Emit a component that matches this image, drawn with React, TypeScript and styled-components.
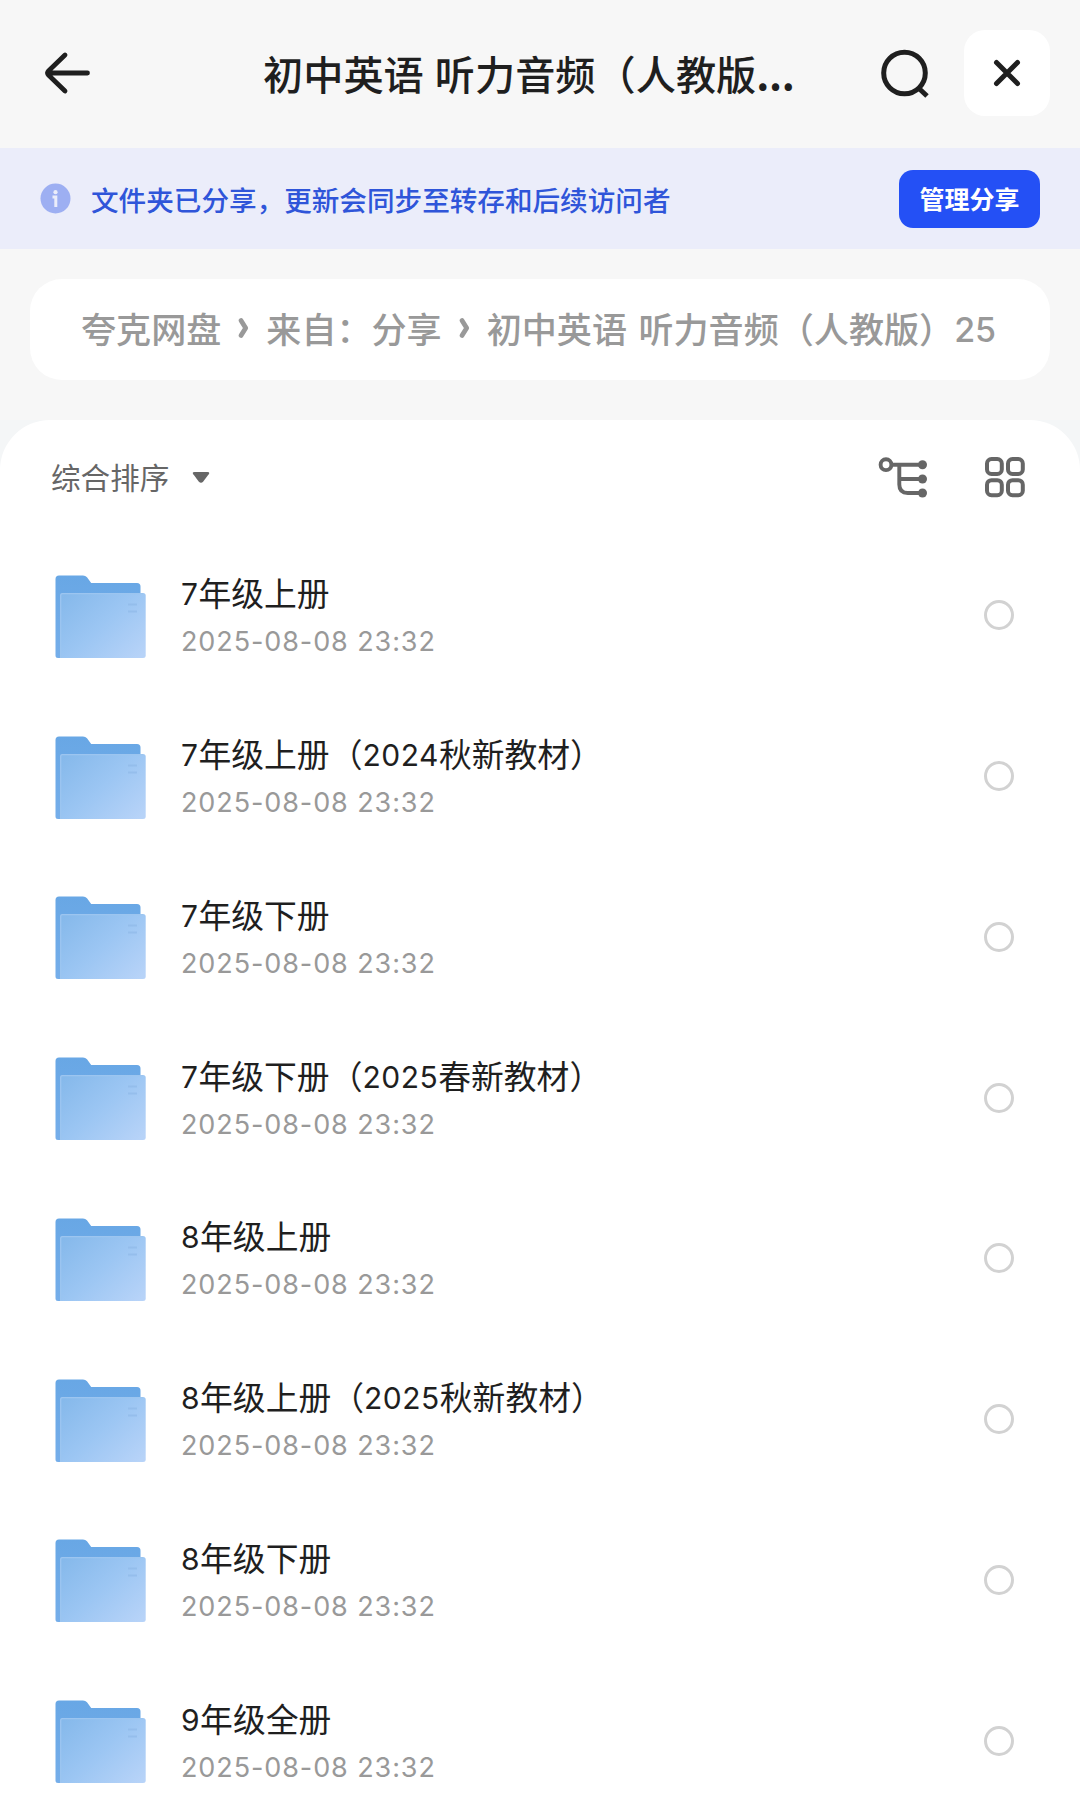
import React from "react";
import styled, { createGlobalStyle } from "styled-components";

const GlobalStyle = createGlobalStyle`
  *, *::before, *::after { box-sizing: border-box; }
  body {
    margin: 0;
    background: #f7f7f7;
    font-family: "Noto Sans CJK SC", "Noto Sans", sans-serif;
    color: #1f1f1f;
  }
  button { border: 0; padding: 0; background: none; font: inherit; color: inherit; }
  svg { display: block; flex: none; }
`;

const Page = styled.main`
  width: 1080px;
  height: 1813px;
  overflow: hidden;
  display: flex;
  flex-direction: column;
`;

const Header = styled.header`
  flex: none;
  height: 148px;
  padding: 0 30px 2px 41px;
  display: flex;
  align-items: center;
`;

const IconButton = styled.button`
  display: flex;
  align-items: center;
  justify-content: center;
  flex: none;
  width: 52px;
  height: 52px;
`;

const Title = styled.h1`
  margin: 0 auto 0 170px;
  font-size: 40.2px;
  line-height: 60px;
  font-weight: 500;
  word-spacing: 2px;
  white-space: nowrap;
`;

const Ellipsis = styled.span`
  letter-spacing: -0.3px;
  font-weight: 700;
`;

const CloseButton = styled(IconButton)`
  width: 86px;
  height: 86px;
  margin-left: 33px;
  border-radius: 21px;
  background: #fff;
`;

const Banner = styled.section`
  flex: none;
  height: 101px;
  padding: 0 40px;
  display: flex;
  align-items: center;
  background: #ebedfa;
`;

const BannerText = styled.p`
  margin: 1px 0 0 20px;
  flex: 1;
  font-size: 27.6px;
  line-height: 40px;
  font-weight: 500;
  color: #2f55d9;
`;

const ManageButton = styled.button`
  width: 141px;
  height: 58px;
  padding-bottom: 1px;
  border-radius: 14px;
  background: #2450f5;
  color: #fff;
  font-size: 25px;
  line-height: 56px;
  font-weight: 700;
`;

const Breadcrumb = styled.nav`
  flex: none;
  margin: 30px 30px 40px;
  height: 101px;
  padding: 0 0 3px 51px;
  border-radius: 32px;
  background: #fff;
  display: flex;
  align-items: center;
  color: #999;
  font-size: 35.1px;
  line-height: 52px;
  font-weight: 500;
  word-spacing: 3.5px;
  white-space: nowrap;
`;

const Crumb = styled.span`
  flex: none;
`;

const Latin = styled.span<{ $size: number; $spacing?: number }>`
  font-family: Inter, "Liberation Sans", sans-serif;
  font-size: ${(p) => p.$size}px;
  line-height: 0;
  vertical-align: 1px;
  letter-spacing: ${(p) => p.$spacing ?? 0}px;
`;

const PanelBackdrop = styled.div`
  flex: 1;
  min-height: 0;
  background: #f4f6f7;
`;

const Panel = styled.section`
  height: 100%;
  border-radius: 50px 50px 0 0;
  background: #fff;
`;

const Toolbar = styled.div`
  height: 115px;
  padding: 0 54px 1px 51px;
  display: flex;
  align-items: center;
  color: #666;
`;

const SortButton = styled.button`
  display: flex;
  align-items: center;
  gap: 23px;
  margin-right: auto;
  padding-bottom: 1px;
  font-size: 29.6px;
  line-height: 44px;
`;

const ToolbarIcons = styled.div`
  display: flex;
  align-items: center;
  gap: 56px;
`;

const List = styled.ul`
  margin: 0;
  padding: 0;
  list-style: none;
`;

const Row = styled.li`
  height: 160.75px;
  padding: 0 66px 0 55px;
  display: flex;
  align-items: center;
`;

const FolderSlot = styled.div`
  padding-top: 3px;
`;

const RowText = styled.div`
  flex: 1;
  margin-left: 35px;
  padding-top: 3px;
  display: flex;
  flex-direction: column;
`;

const Name = styled.div`
  font-size: 32.8px;
  line-height: 48px;
  height: 51px;
  white-space: nowrap;
`;

const DateLine = styled.time`
  height: 46px;
  font-family: Inter, "Liberation Sans", sans-serif;
  font-size: 27px;
  line-height: 46px;
  letter-spacing: 0.9px;
  color: #999;
  white-space: nowrap;
`;

const Radio = styled.span`
  width: 30px;
  height: 30px;
  border: 3px solid #d2d2d2;
  border-radius: 50%;
`;

const BackIcon = () => (
  <svg width="52" height="52" viewBox="0 0 52 52" fill="none" stroke="#1f1f1f" strokeWidth="4.8" strokeLinecap="round" strokeLinejoin="round">
    <path d="M46.500 26H6.4M24 8 7.700 23.7Q5.500 26 7.700 28.300L24 44" />
  </svg>
);

const SearchIcon = () => (
  <svg width="52" height="52" viewBox="0 0 52 52" fill="none" stroke="#1f1f1f" strokeWidth="5">
    <circle cx="25.500" cy="26" r="20.800" />
    <path d="m39.500 41 8.500 8" />
  </svg>
);

const CloseIcon = () => (
  <svg width="30" height="30" viewBox="0 0 30 30" fill="none" stroke="#1f1f1f" strokeWidth="5" strokeLinecap="round">
    <path d="m4.500 4.500 21 21M25.500 4.500l-21 21" />
  </svg>
);

const InfoIcon = () => (
  <svg width="31" height="31" viewBox="0 0 31 31">
    <circle cx="15.500" cy="15.500" r="15" fill="#9daff2" />
    <circle cx="15.500" cy="9.200" r="2.100" fill="#ebedfa" />
    <path d="M12.500 14h3.300v10" fill="none" stroke="#ebedfa" strokeWidth="3" />
  </svg>
);

const Chevron = () => (
  <svg width="45" height="24" viewBox="0 0 45 24" fill="none" stroke="#999" strokeWidth="4.800" strokeLinecap="round" strokeLinejoin="round">
    <path d="m20 4.500 4.700 7.500-4.700 7.500" />
  </svg>
);

const CaretIcon = () => (
  <svg width="18" height="14" viewBox="0 0 18 14">
    <path d="M2.500 2h13q2.800 0 1.200 2.300l-5.600 7.400q-2.100 2.200-4.200 0l-5.600-7.400Q-.300 2 2.500 2Z" fill="#666" />
  </svg>
);

const TreeIcon = () => (
  <svg width="50" height="42" viewBox="0 0 50 42" fill="none" stroke="#666" strokeWidth="3.900">
    <circle cx="8" cy="8.700" r="5.400" />
    <path d="M13.500 8.700H44M21.300 8.700V28.500Q21.300 37 29.800 37H44M21.300 23H44" />
    <g fill="#666" stroke="none">
      <circle cx="44.500" cy="8.700" r="4.500" />
      <circle cx="44.500" cy="23" r="4.500" />
      <circle cx="44.500" cy="37" r="4.500" />
    </g>
  </svg>
);

const GridIcon = () => (
  <svg width="42" height="42" viewBox="0 0 42 42" fill="none" stroke="#666" strokeWidth="4">
    <rect x="3" y="3" width="14.800" height="15" rx="4.500" />
    <rect x="24" y="3" width="14.800" height="15" rx="4.500" />
    <rect x="3" y="24.200" width="14.800" height="15" rx="4.500" />
    <rect x="24" y="24.200" width="14.800" height="15" rx="4.500" />
  </svg>
);

const FolderIcon = () => (
  <svg width="91" height="84" viewBox="0 0 91 84">
    <path d="M.500 4Q.500 .500 4 .500H28Q30.500 .500 32 2.300L36.200 8H82Q85.500 8 85.500 11.500V60H6V83H3Q.500 83 .500 80.500Z" fill="url(#folderBack)" />
    <path d="M5 20.500Q5 18 7.500 18H88Q90.700 18 90.700 20.500V80.500Q90.700 83 88 83H5Z" fill="url(#folderFront)" />
    <path d="M5.700 83V20.500Q5.700 18.700 7.500 18.700H88" fill="none" stroke="#9cc5f0" strokeWidth="1.300" />
    <path d="M73 29.500h9M73 36.500h9" stroke="#8fb9e8" strokeWidth="1.800" opacity=".65" />
  </svg>
);

const GradientDefs = () => (
  <svg width="0" height="0" aria-hidden="true">
    <defs>
      <linearGradient id="folderBack" x1="0" y1="0" x2="0" y2="1">
        <stop offset="0" stopColor="#68a7e5" />
        <stop offset="1" stopColor="#75aeea" />
      </linearGradient>
      <linearGradient id="folderFront" x1="0" y1="0.100" x2="1" y2="0.900">
        <stop offset="0" stopColor="#86b9eb" />
        <stop offset=".5" stopColor="#9cc6f3" />
        <stop offset="1" stopColor="#b7d3f8" />
      </linearGradient>
    </defs>
  </svg>
);

const folders = [
  "7年级上册",
  "7年级上册（2024秋新教材）",
  "7年级下册",
  "7年级下册（2025春新教材）",
  "8年级上册",
  "8年级上册（2025秋新教材）",
  "8年级下册",
  "9年级全册",
];

const MixedText = ({ text, size, spacing }: { text: string; size: number; spacing?: number }) => (
  <>
    {text.split(/(\d+)/).map((part, i) =>
      /^\d+$/.test(part) ? (
        <Latin key={i} $size={size} $spacing={spacing}>{part}</Latin>
      ) : (
        part
      )
    )}
  </>
);

export default function App() {
  return (
    <Page>
      <GlobalStyle />
      <Header>
        <IconButton aria-label="返回"><BackIcon /></IconButton>
        <Title>初中英语 听力音频（人教版<Ellipsis>...</Ellipsis></Title>
        <IconButton aria-label="搜索"><SearchIcon /></IconButton>
        <CloseButton aria-label="关闭"><CloseIcon /></CloseButton>
      </Header>
      <Banner>
        <InfoIcon />
        <BannerText>文件夹已分享，更新会同步至转存和后续访问者</BannerText>
        <ManageButton>管理分享</ManageButton>
      </Banner>
      <Breadcrumb>
        <Crumb>夸克网盘</Crumb>
        <Chevron />
        <Crumb>来自：分享</Crumb>
        <Chevron />
        <Crumb><MixedText text="初中英语 听力音频（人教版）25" size={34} /></Crumb>
      </Breadcrumb>
      <PanelBackdrop>
        <Panel>
          <Toolbar>
            <SortButton>综合排序<CaretIcon /></SortButton>
            <ToolbarIcons>
              <TreeIcon />
              <GridIcon />
            </ToolbarIcons>
          </Toolbar>
          <List>
            {folders.map((name) => (
              <Row key={name}>
                <FolderSlot><FolderIcon /></FolderSlot>
                <RowText>
                  <Name><MixedText text={name} size={30} spacing={0.5} /></Name>
                  <DateLine>2025-08-08 23:32</DateLine>
                </RowText>
                <Radio />
              </Row>
            ))}
          </List>
          <GradientDefs />
        </Panel>
      </PanelBackdrop>
    </Page>
  );
}
